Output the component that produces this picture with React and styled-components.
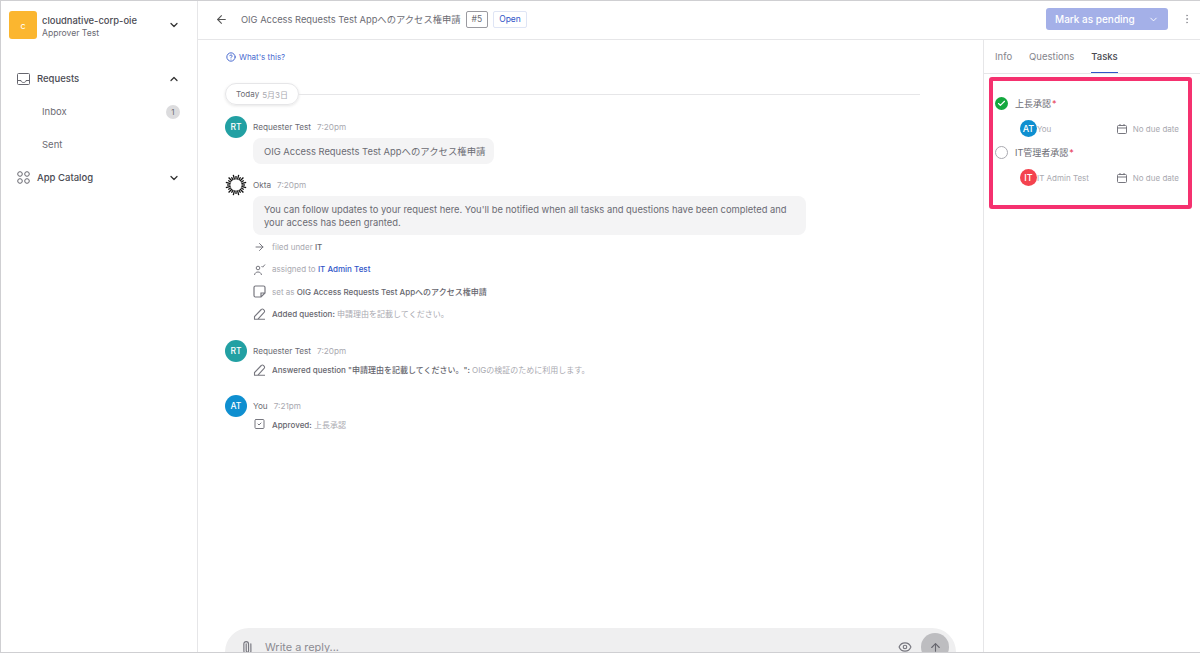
import React from 'react';
import styled, { createGlobalStyle } from 'styled-components';
import {
  ArrowLeft, ArrowRight, ArrowUp, ChevronDown, ChevronUp, CircleHelp, Eye,
  MoreVertical, Paperclip, SquareCheck, Check,
} from 'lucide-react';

const GlobalStyle = createGlobalStyle`
  html, body { margin: 0; padding: 0; background: #fff; }
  body { font-family: Inter, "Noto Sans CJK JP", sans-serif; }
  * { box-sizing: border-box; }
`;

const colors = {
  text: '#6b6b73',
  dark: '#4a4a52',
  muted: '#a9a9b0',
  line: '#e6e6e8',
  bubble: '#f4f4f5',
  blue: '#2f55c8',
};

const Frame = styled.div`
  width: 1200px;
  height: 653px;
  display: flex;
  overflow: hidden;
  border: 1px solid #cfcfd2;
  border-right: none;
`;

const Sidebar = styled.aside`
  width: 197px;
  flex-shrink: 0;
  border-right: 1px solid ${colors.line};
  color: ${colors.text};
`;

const OrgRow = styled.div`
  display: flex;
  align-items: center;
  padding: 10px 17px 0 8px;
`;

const OrgLogo = styled.div`
  width: 28px;
  height: 28px;
  border-radius: 3px;
  background: #fbb62f;
  color: #fff;
  font-size: 9px;
  display: flex;
  align-items: center;
  justify-content: center;
  margin-right: 5px;
`;

const OrgText = styled.div`
  flex: 1;
  margin-top: 4px;
  font-size: 8.6px;
  line-height: 12px;
  color: ${colors.text};
  strong { display: block; font-weight: 500; color: ${colors.dark}; font-size: 9.4px; }
`;

const Nav = styled.nav`
  margin-top: 23px;
  font-size: 9.5px;
`;

const NavItem = styled.div`
  height: 33px;
  display: flex;
  align-items: center;
  padding: 0 17px 0 ${(p) => (p.$sub ? '41px' : '16px')};
  font-weight: ${(p) => (p.$sub ? 400 : 500)};
  color: ${(p) => (p.$sub ? colors.text : colors.dark)};
  svg.lead { margin-right: 7px; }
  span.label { flex: 1; }
`;

const CountBadge = styled.span`
  width: 14px;
  height: 14px;
  border-radius: 50%;
  background: #dcdcde;
  font-size: 8px;
  display: flex;
  align-items: center;
  justify-content: center;
`;

const Content = styled.div`
  flex: 1;
  min-width: 0;
  display: flex;
  flex-direction: column;
`;

const Header = styled.header`
  height: 39px;
  flex-shrink: 0;
  display: flex;
  align-items: center;
  padding: 0 7px 2px 17px;
  border-bottom: 1px solid ${colors.line};
  font-size: 9.3px;
  color: ${colors.text};
`;

const Title = styled.span`
  margin: 0 5px 0 13px;
`;

const NumberTag = styled.span`
  height: 17px;
  padding: 0 5px;
  display: flex;
  align-items: center;
  border: 1px solid #9a9aa0;
  border-radius: 2px;
  font-size: 8.5px;
  margin-right: 5px;
`;

const StatusTag = styled.span`
  height: 17px;
  padding: 0 5px;
  display: flex;
  align-items: center;
  border: 1px solid #dfe5f5;
  border-radius: 2px;
  font-size: 8.5px;
  color: ${colors.blue};
`;

const PendingButton = styled.div`
  margin-left: auto;
  width: 122px;
  height: 22px;
  padding: 0 9px;
  display: flex;
  align-items: center;
  justify-content: space-between;
  background: #a4b0e8;
  border-radius: 3px;
  color: #fff;
  font-size: 10px;
  font-weight: 500;
`;

const MoreButton = styled.div`
  margin-left: 13px;
  color: #9a9aa0;
  display: flex;
`;

const Body = styled.div`
  flex: 1;
  min-height: 0;
  display: flex;
`;

const Thread = styled.main`
  flex: 1;
  min-width: 0;
  display: flex;
  flex-direction: column;
  padding: 0 27px;
  border-right: 1px solid ${colors.line};
`;

const HelpLink = styled.div`
  display: flex;
  align-items: center;
  gap: 3px;
  margin: 11px 0 0 1px;
  height: 12px;
  font-size: 8px;
  color: #4a6bd0;
`;

const Feed = styled.div`
  flex: 1;
`;

const DateRow = styled.div`
  display: flex;
  align-items: center;
  margin: 20px 36px 11px 0;
  &::after { content: ''; flex: 1; height: 1px; background: ${colors.line}; }
`;

const DatePill = styled.div`
  width: 74px;
  height: 22px;
  display: flex;
  align-items: center;
  justify-content: center;
  gap: 3px;
  border: 1px solid ${colors.line};
  border-radius: 11px;
  box-shadow: 0 1px 3px rgba(0, 0, 0, 0.1);
  font-size: 8px;
  color: ${colors.text};
  span { color: ${colors.muted}; }
`;

const Message = styled.div`
  margin-bottom: ${(p) => p.$gap || 0}px;
`;

const Author = styled.div`
  height: 22px;
  display: flex;
  align-items: center;
  font-size: 8.2px;
  color: ${colors.text};
  span { margin: 0 0 0 6px; color: ${colors.muted}; }
`;

const Avatar = styled.div`
  width: 22px;
  height: 22px;
  border-radius: 50%;
  background: ${(p) => p.$bg};
  color: #fff;
  font-size: 8.5px;
  font-weight: 500;
  display: flex;
  align-items: center;
  justify-content: center;
  flex-shrink: 0;
`;

const Name = styled.div`
  margin-left: 6px;
`;

const Bubble = styled.div`
  width: fit-content;
  max-width: 553px;
  margin: 0 0 1px 28px;
  padding: 6.5px 9px 6.5px 11px;
  background: ${colors.bubble};
  border-radius: 8px;
  font-size: 9.4px;
  line-height: 13px;
  color: ${colors.text};
`;

const WideBubble = styled(Bubble)`
  width: 553px;
`;

const Event = styled.div`
  height: 22px;
  margin-left: 28px;
  display: flex;
  align-items: center;
  gap: 6px;
  font-size: 8px;
  color: ${colors.muted};
  svg { color: #77777f; flex-shrink: 0; width: 13px; }
  b { font-weight: 500; color: #66666e; }
  b.link { color: ${colors.blue}; }
`;

const ReplyEvent = styled(Event)`
  margin-top: -4px;
`;

const EventText = styled.div`
  white-space: nowrap;
`;

const Composer = styled.div`
  height: 50px;
  margin-bottom: -26px;
  display: flex;
  align-items: flex-start;
  padding: 5px 7px 0 15px;
  background: #efeff0;
  border-radius: 24px;
  color: #77777f;
  font-size: 10.9px;
`;

const ClipIcon = styled(Paperclip)`
  margin-top: 8px;
  transform: rotate(-45deg);
`;

const EyeIcon = styled(Eye)`
  margin-top: 7px;
`;

const Placeholder = styled.div`
  flex: 1;
  margin-left: 11px;
  line-height: 28px;
  color: #8b8b92;
`;

const SendButton = styled.div`
  width: 28px;
  height: 28px;
  border-radius: 50%;
  background: #bdbdc0;
  margin-left: 9px;
  display: flex;
  align-items: center;
  justify-content: center;
`;

const Panel = styled.aside`
  width: 216px;
  flex-shrink: 0;
`;

const Tabs = styled.div`
  height: 34px;
  display: flex;
  gap: 17px;
  padding: 0 11px;
  border-bottom: 1px solid ${colors.line};
  font-size: 9.5px;
  color: #85858c;
`;

const Tab = styled.div`
  padding-top: 11px;
  ${(p) => p.$active && `color: ${colors.dark}; font-weight: 500; border-bottom: 1px solid ${colors.blue};`}
`;

const TaskBox = styled.div`
  height: 132px;
  margin: 3px 8px 0 5px;
  padding: 10px 9px 0 2px;
  border: 4px solid #f5316f;
  border-radius: 3px;
`;

const TaskHead = styled.div`
  height: 24px;
  display: flex;
  align-items: center;
  gap: 7px;
  font-size: 9px;
  color: ${colors.text};
  i { color: #e5344f; font-style: normal; margin-left: 1px; }
`;

const DoneMark = styled.div`
  width: 13px;
  height: 13px;
  border-radius: 50%;
  background: #14a83e;
  display: flex;
  align-items: center;
  justify-content: center;
`;

const EmptyMark = styled.div`
  width: 13px;
  height: 13px;
  border-radius: 50%;
  border: 1px solid #a9a9b0;
`;

const TaskMeta = styled.div`
  height: 25px;
  display: flex;
  align-items: center;
  padding: 2px 0 0 25px;
  font-size: 8px;
  color: ${colors.muted};
`;

const TaskAvatar = styled(Avatar)`
  width: 17px;
  height: 17px;
  font-size: 9px;
`;

const DueDate = styled.div`
  margin-left: auto;
  display: flex;
  align-items: center;
  gap: 6px;
`;

const OktaMark = () => (
  <svg width="22" height="22" viewBox="0 0 22 22">
    {Array.from({ length: 24 }, (_, i) => {
      const a = (i / 24) * Math.PI * 2;
      const outer = i % 2 ? 10.5 : 9;
      return (
        <line
          key={i}
          x1={11 + Math.cos(a) * 5.6}
          y1={11 + Math.sin(a) * 5.6}
          x2={11 + Math.cos(a) * outer}
          y2={11 + Math.sin(a) * outer}
          stroke="#111"
          strokeWidth="1.3"
        />
      );
    })}
  </svg>
);

const InboxIcon = () => (
  <svg className="lead" width="13" height="12" viewBox="0 0 13 12" fill="none" stroke="#66666e">
    <rect x="0.5" y="0.5" width="12" height="11" rx="1" />
    <path d="M0.500 7.500H4c0 1.200 1 2 2.500 2s2.500-.8 2.500-2h3.500" />
  </svg>
);

const CatalogIcon = () => (
  <svg className="lead" width="13" height="13" viewBox="0 0 13 13" fill="none" stroke="#66666e">
    <circle cx="3" cy="3" r="2.3" />
    <circle cx="10" cy="3" r="2.3" />
    <circle cx="3" cy="10" r="2.3" />
    <circle cx="10" cy="10" r="2.3" />
  </svg>
);

const AssignIcon = () => (
  <svg width="13" height="13" viewBox="0 0 13 13" fill="none" stroke="currentColor">
    <circle cx="5" cy="5" r="1.800" />
    <path d="M1.500 12c.3-2 1.700-3 3.500-3s3.200 1 3.500 3M8.500 3l1.200 1.200L12 1.500" />
  </svg>
);

const NoteIcon = () => (
  <svg width="13" height="13" viewBox="0 0 13 13" fill="none" stroke="currentColor" strokeWidth="1.200">
    <path d="M8 12H2.500a1.500 1.500 0 0 1-1.500-1.500v-8A1.500 1.500 0 0 1 2.500 1h8A1.500 1.500 0 0 1 12 2.500V8zM8 12V8h4" />
  </svg>
);

const PenIcon = () => (
  <svg width="13" height="13" viewBox="0 0 13 13" fill="none" stroke="currentColor" strokeWidth="1.100">
    <path d="M1 12.300h11M1.500 12.300V9.500l6.800-7a1.500 1.500 0 0 1 2.200 0l.6.600a1.500 1.500 0 0 1 0 2.200l-6.400 7" />
  </svg>
);

const CalendarIcon = () => (
  <svg width="10" height="10" viewBox="0 0 10 10" fill="none" stroke="#77777f">
    <rect x="0.500" y="1.500" width="9" height="8" rx="1" />
    <path d="M0.500 4h9M3 0v2M7 0v2" />
  </svg>
);

const Task = ({ done, title, initials, bg, who }) => (
  <>
    <TaskHead>
      {done ? (
        <DoneMark><Check size={9} color="#fff" strokeWidth={3} /></DoneMark>
      ) : (
        <EmptyMark />
      )}
      <span>{title}<i>*</i></span>
    </TaskHead>
    <TaskMeta>
      <TaskAvatar $bg={bg}>{initials}</TaskAvatar>
      <span>{who}</span>
      <DueDate><CalendarIcon />No due date</DueDate>
    </TaskMeta>
  </>
);

export default function App() {
  return (
    <>
      <GlobalStyle />
      <Frame>
        <Sidebar>
          <OrgRow>
            <OrgLogo>c</OrgLogo>
            <OrgText>
              <strong>cloudnative-corp-oie</strong>
              Approver Test
            </OrgText>
            <ChevronDown size={12} color="#333" strokeWidth={2.5} />
          </OrgRow>
          <Nav>
            <NavItem><InboxIcon /><span className="label">Requests</span><ChevronUp size={12} color="#333" strokeWidth={2.5} /></NavItem>
            <NavItem $sub><span className="label">Inbox</span><CountBadge>1</CountBadge></NavItem>
            <NavItem $sub><span className="label">Sent</span></NavItem>
            <NavItem><CatalogIcon /><span className="label">App Catalog</span><ChevronDown size={12} color="#333" strokeWidth={2.5} /></NavItem>
          </Nav>
        </Sidebar>
        <Content>
          <Header>
            <ArrowLeft size={13} color="#555" />
            <Title>OIG Access Requests Test Appへのアクセス権申請</Title>
            <NumberTag>#5</NumberTag>
            <StatusTag>Open</StatusTag>
            <PendingButton>Mark as pending<ChevronDown size={11} /></PendingButton>
            <MoreButton><MoreVertical size={12} /></MoreButton>
          </Header>
          <Body>
            <Thread>
              <HelpLink><CircleHelp size={10} strokeWidth={2.4} />What's this?</HelpLink>
              <Feed>
                <DateRow><DatePill>Today <span>5月3日</span></DatePill></DateRow>
                <Message $gap={10}>
                  <Author>
                    <Avatar $bg="#22a0a3">RT</Avatar>
                    <Name>Requester Test</Name><span>7:20pm</span>
                  </Author>
                  <Bubble>OIG Access Requests Test Appへのアクセス権申請</Bubble>
                </Message>
                <Message $gap={16}>
                  <Author>
                    <OktaMark />
                    <Name>Okta</Name><span>7:20pm</span>
                  </Author>
                  <WideBubble>You can follow updates to your request here. You'll be notified when all tasks and questions have been completed and your access has been granted.</WideBubble>
                  <Event><ArrowRight size={12} /><EventText>filed under <b>IT</b></EventText></Event>
                  <Event><AssignIcon /><EventText>assigned to <b className="link">IT Admin Test</b></EventText></Event>
                  <Event><NoteIcon /><EventText>set as <b>OIG Access Requests Test Appへのアクセス権申請</b></EventText></Event>
                  <Event><PenIcon /><EventText><b>Added question:</b> 申請理由を記載してください。</EventText></Event>
                </Message>
                <Message $gap={15}>
                  <Author>
                    <Avatar $bg="#22a0a3">RT</Avatar>
                    <Name>Requester Test</Name><span>7:20pm</span>
                  </Author>
                  <ReplyEvent><PenIcon /><EventText><b>Answered question "申請理由を記載してください。":</b> OIGの検証のために利用します。</EventText></ReplyEvent>
                </Message>
                <Message>
                  <Author>
                    <Avatar $bg="#0f8fd0">AT</Avatar>
                    <Name>You</Name><span>7:21pm</span>
                  </Author>
                  <ReplyEvent><SquareCheck size={12} /><EventText><b>Approved:</b> 上長承認</EventText></ReplyEvent>
                </Message>
              </Feed>
              <Composer>
                <ClipIcon size={14} />
                <Placeholder>Write a reply...</Placeholder>
                <EyeIcon size={14} />
                <SendButton><ArrowUp size={13} color="#66666e" /></SendButton>
              </Composer>
            </Thread>
            <Panel>
              <Tabs>
                <Tab>Info</Tab>
                <Tab>Questions</Tab>
                <Tab $active>Tasks</Tab>
              </Tabs>
              <TaskBox>
                <Task done title="上長承認" initials="AT" bg="#0f8fd0" who="You" />
                <Task title="IT管理者承認" initials="IT" bg="#f4434f" who="IT Admin Test" />
              </TaskBox>
            </Panel>
          </Body>
        </Content>
      </Frame>
    </>
  );
}
